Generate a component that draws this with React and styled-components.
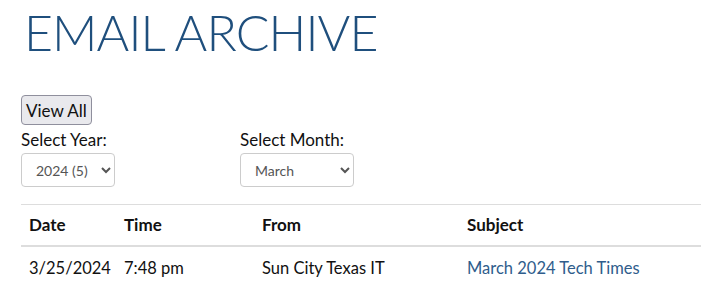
import React from "react";
import styled, { createGlobalStyle } from "styled-components";

const Global = createGlobalStyle`
  body {
    margin: 0;
    font-family: Lato, "Noto Sans", sans-serif;
    color: #111;
    background: #fff;
  }
`;

const Page = styled.div`
  padding: 0 0 0 21px;
`;

const Title = styled.h1`
  margin: 0;
  padding-top: 4px;
  font-family: Lato, sans-serif;
  font-weight: 300;
  font-size: 50px;
  line-height: 56px;
  letter-spacing: -0.9px;
  color: #1f4f7d;
  padding-left: 3px;
`;

const Button = styled.button`
  margin-top: 35px;
  font-family: Lato, sans-serif;
  font-size: 17px;
  color: #111;
  background: #e9e9ed;
  border: 1px solid #8f8f9d;
  border-radius: 4px;
  height: 30px;
  padding: 0 4px;
  display: block;
`;

const Filters = styled.div`
  display: grid;
  grid-template-columns: 219px 200px;
  margin-top: 4px;
`;

const Field = styled.div`
  display: flex;
  flex-direction: column;
  align-items: flex-start;
`;

const Label = styled.label`
  font-size: 17px;
  line-height: 22px;
  margin-bottom: 2px;
`;

const Select = styled.select`
  width: ${(p) => p.$w}px;
  height: 34px;
  font-family: Lato, sans-serif;
  font-size: 14px;
  color: #555;
  background: #fff;
  border: 1px solid #ccc;
  border-radius: 4px;
  padding: 0 8px 0 10px;
`;

const Table = styled.table`
  margin-top: 17px;
  width: 680px;
  table-layout: fixed;
  border-collapse: collapse;
  font-size: 16px;
`;

const Col = styled.col`
  width: ${(p) => (p.$w ? `${p.$w}px` : "auto")};
`;

const Th = styled.th`
  text-align: left;
  font-weight: 700;
  font-size: 17px;
  line-height: 20px;
  padding: 10px 8px;
  border-top: 1px solid #ddd;
  border-bottom: 2px solid #ddd;
`;

const Td = styled.td`
  padding: 11px 8px;
  font-size: 16.5px;
`;

const Link = styled.a`
  color: #2f5d8c;
  text-decoration: none;
`;

export default function App() {
  return (
    <Page>
      <Global />
      <Title>EMAIL ARCHIVE</Title>
      <Button>View All</Button>
      <Filters>
        <Field>
          <Label>Select Year:</Label>
          <Select $w={94} defaultValue="2024">
            <option value="2024">2024 (5)</option>
          </Select>
        </Field>
        <Field>
          <Label>Select Month:</Label>
          <Select $w={114} defaultValue="March">
            <option value="March">March</option>
          </Select>
        </Field>
      </Filters>
      <Table>
        <colgroup>
          <Col $w={95} />
          <Col $w={138} />
          <Col $w={205} />
          <Col />
        </colgroup>
        <thead>
          <tr>
            <Th>Date</Th>
            <Th>Time</Th>
            <Th>From</Th>
            <Th>Subject</Th>
          </tr>
        </thead>
        <tbody>
          <tr>
            <Td>3/25/2024</Td>
            <Td>7:48 pm</Td>
            <Td>Sun City Texas IT</Td>
            <Td>
              <Link href="#">March 2024 Tech Times</Link>
            </Td>
          </tr>
        </tbody>
      </Table>
    </Page>
  );
}
